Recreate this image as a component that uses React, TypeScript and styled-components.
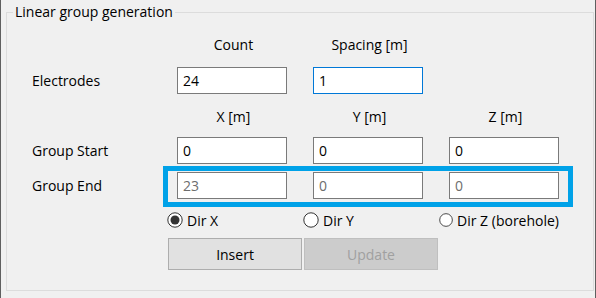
import React from "react";
import styled, { createGlobalStyle } from "styled-components";

const GlobalStyle = createGlobalStyle`
  html, body { margin: 0; padding: 0; background: #f0f0f0; }
  body {
    font-family: "Open Sans", "Noto Sans", sans-serif;
    font-size: 14px;
    color: #000;
  }
`;

const Window = styled.div`
  width: 596px;
  height: 298px;
  box-sizing: border-box;
  border-left: 1px solid #5f5f5f;
  border-right: 1px solid #5f5f5f;
  background: #f0f0f0;
  padding: 2px 1px 0 5px;
`;

const Group = styled.fieldset`
  margin: 0;
  padding: 0;
  width: 588px;
  height: 289px;
  box-sizing: border-box;
  min-width: 0;
  border: 1px solid #dcdcdc;
`;

const Legend = styled.legend`
  margin-left: 6px;
  padding: 0 2px;
  line-height: 20px;
  font-size: 14px;
`;

const Body = styled.div`
  display: flex;
  flex-direction: column;
  padding: 12px 0 0 25px;
`;

const Row = styled.div<{ $h: number; $mt: number }>`
  position: relative;
  display: grid;
  grid-template-columns: 119px 110px 110px 110px;
  column-gap: 26px;
  align-items: center;
  height: ${(p) => p.$h}px;
  margin-top: ${(p) => p.$mt}px;
`;

const Label = styled.div`
  white-space: nowrap;
`;

const Header = styled.div`
  text-align: center;
  padding-left: 3px;
  white-space: nowrap;
`;

const Field = styled.input<{ $focused?: boolean }>`
  box-sizing: border-box;
  width: 110px;
  height: 27px;
  margin: 0;
  padding: 0 0 0 5px;
  border: 1px solid ${(p) => (p.$focused ? "#0078d7" : "#7a7a7a")};
  border-radius: 0;
  background: #fff;
  font: inherit;
  color: #000;
  outline: none;
  &:disabled {
    color: #6d6d6d;
    background: #fff;
    -webkit-text-fill-color: #6d6d6d;
    opacity: 1;
  }
`;

const Highlight = styled.div`
  position: absolute;
  left: 131px;
  top: -6px;
  width: 410px;
  height: 41px;
  box-sizing: border-box;
  border: 5px solid #00a2e8;
  pointer-events: none;
`;

const RadioLabel = styled.label`
  display: inline-flex;
  align-items: center;
  gap: 4px;
  margin-left: -10px;
  white-space: nowrap;
`;

const Buttons = styled.div`
  grid-column: 2 / span 3;
  display: flex;
  gap: 2px;
  margin-left: -9px;
`;

const Button = styled.button`
  box-sizing: border-box;
  width: 134px;
  height: 32px;
  margin: 0;
  padding: 0;
  border: 1px solid #adadad;
  border-radius: 0;
  background: #e1e1e1;
  font: inherit;
  color: #000;
  &:disabled {
    background: #cccccc;
    border-color: #bfbfbf;
    color: #a0a0a0;
  }
`;

const Radio: React.FC<{ checked?: boolean; label: string }> = ({ checked, label }) => (
  <RadioLabel>
    <svg width="16" height="16" viewBox="0 0 16 16">
      <circle cx="8" cy="8" r="7.2" fill="#fff" stroke="#333" strokeWidth="1" />
      {checked && <circle cx="8" cy="8" r="4.5" fill="#333" />}
    </svg>
    {label}
  </RadioLabel>
);

export default function App() {
  return (
    <>
      <GlobalStyle />
      <Window>
        <Group>
          <Legend>Linear group generation</Legend>
          <Body>
            <Row $h={20} $mt={0}>
              <span />
              <Header>Count</Header>
              <Header>Spacing [m]</Header>
            </Row>
            <Row $h={27} $mt={13}>
              <Label>Electrodes</Label>
              <Field defaultValue="24" />
              <Field defaultValue="1" $focused />
            </Row>
            <Row $h={20} $mt={12}>
              <span />
              <Header>X [m]</Header>
              <Header>Y [m]</Header>
              <Header>Z [m]</Header>
            </Row>
            <Row $h={27} $mt={11}>
              <Label>Group Start</Label>
              <Field defaultValue="0" />
              <Field defaultValue="0" />
              <Field defaultValue="0" />
            </Row>
            <Row $h={27} $mt={8}>
              <Label>Group End</Label>
              <Field defaultValue="23" disabled />
              <Field defaultValue="0" disabled />
              <Field defaultValue="0" disabled />
              <Highlight />
            </Row>
            <Row $h={20} $mt={11}>
              <span />
              <Radio checked label="Dir X" />
              <Radio label="Dir Y" />
              <Radio label="Dir Z (borehole)" />
            </Row>
            <Row $h={32} $mt={8}>
              <span />
              <Buttons>
                <Button>Insert</Button>
                <Button disabled>Update</Button>
              </Buttons>
            </Row>
          </Body>
        </Group>
      </Window>
    </>
  );
}
